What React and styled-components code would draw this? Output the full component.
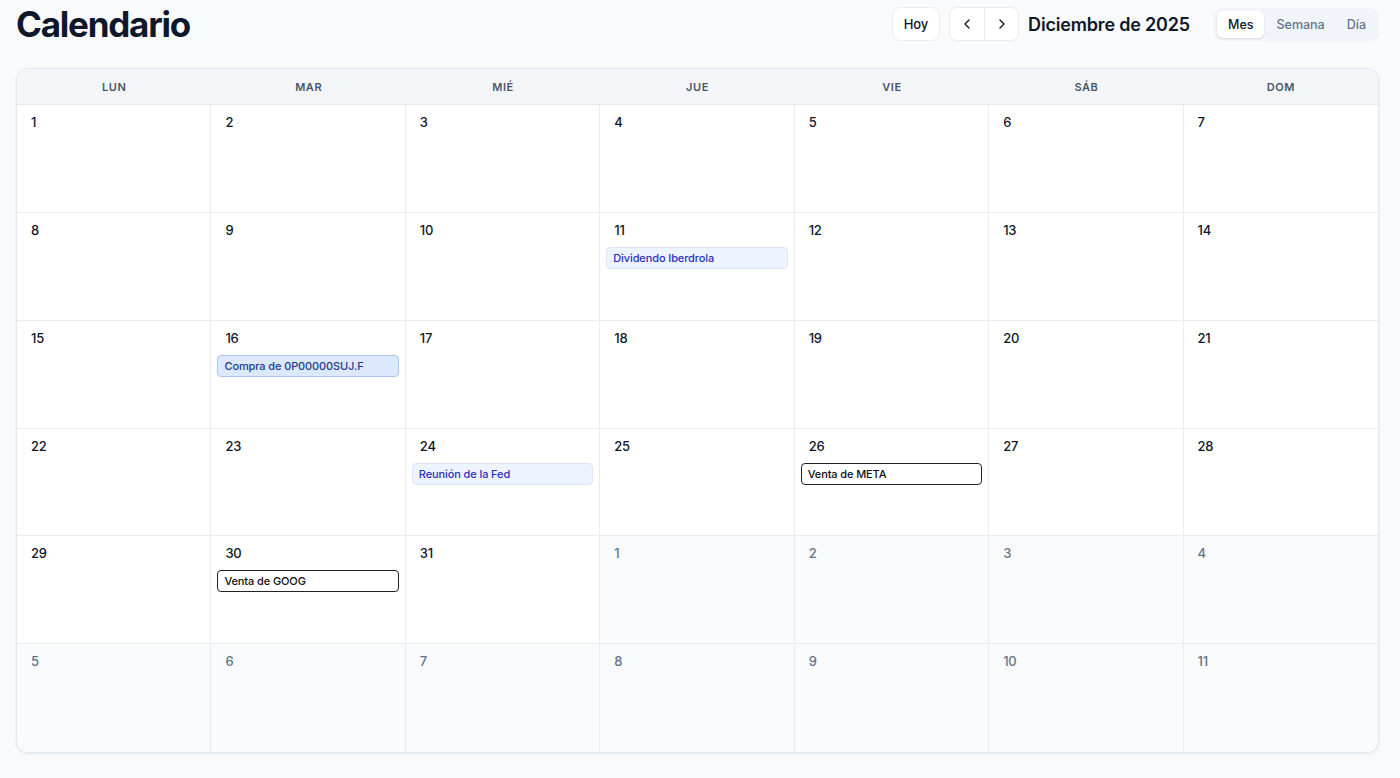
import React from 'react';
import styled, { createGlobalStyle } from 'styled-components';
import { ChevronLeft, ChevronRight } from 'lucide-react';

const GlobalStyle = createGlobalStyle`
  * { box-sizing: border-box; }
  html, body { margin: 0; padding: 0; background: #f8fafc; }
  body {
    font-family: Inter, "Noto Sans", "Liberation Sans", sans-serif;
    color: #0f172a;
  }
`;

// Page wrapper
const Page = styled.div`
  height: 100vh;
  display: flex;
  flex-direction: column;
  padding: 6px 21px 25px 16px;
  background: #f8fafc;
`;

const TopBar = styled.header`
  height: 36px;
  display: flex;
  align-items: center;
  justify-content: space-between;
  margin-bottom: 26px;
`;

const Title = styled.h1`
  margin: 0;
  font-size: 35px;
  font-weight: 700;
  letter-spacing: -0.035em;
  color: #0f172a;
  line-height: 36px;
`;

const Controls = styled.div`
  display: flex;
  align-items: center;
  gap: 9px;
`;

const PlainButton = styled.button`
  height: 34px;
  padding: 0 11px;
  border: 1px solid #e8ecf1;
  border-radius: 8px;
  background: #fff;
  font-family: inherit;
  font-size: 13px;
  font-weight: 500;
  letter-spacing: -0.01em;
  color: #0f172a;
  cursor: pointer;
`;

const NavGroup = styled.div`
  display: flex;
  height: 34px;
  border: 1px solid #e8ecf1;
  border-radius: 8px;
  background: #fff;
  overflow: hidden;
`;

const NavButton = styled.button`
  width: 34px;
  display: flex;
  align-items: center;
  justify-content: center;
  border: 0;
  background: transparent;
  color: #0f172a;
  cursor: pointer;
  & + & { border-left: 1px solid #e8ecf1; }
`;

const MonthLabel = styled.span`
  font-size: 18px;
  font-weight: 600;
  letter-spacing: -0.01em;
  color: #0f172a;
  margin-right: 15px;
`;

const Segmented = styled.div`
  display: flex;
  height: 33px;
  padding: 3px;
  gap: 2px;
  border-radius: 8px;
  background: #f1f4f8;
`;

const Segment = styled.button`
  height: 27px;
  padding: 0 ${(p) => (p.$active ? '11px' : '10px')};
  border: 0;
  border-radius: 6px;
  background: ${(p) => (p.$active ? '#fff' : 'transparent')};
  box-shadow: ${(p) => (p.$active ? '0 1px 2px rgba(15, 23, 42, 0.12)' : 'none')};
  font-family: inherit;
  font-size: 12.5px;
  font-weight: 500;
  color: ${(p) => (p.$active ? '#0f172a' : '#64748b')};
  cursor: pointer;
`;

// Calendar grid
const Board = styled.div`
  flex: 1;
  display: flex;
  flex-direction: column;
  border: 1px solid #e3e8ee;
  border-radius: 12px;
  background: #fff;
  box-shadow: 0 1px 3px rgba(15, 23, 42, 0.08);
  overflow: hidden;
`;

const WeekDays = styled.div`
  display: grid;
  grid-template-columns: repeat(7, 1fr);
  height: 36px;
  background: #f3f5f8;
  border-bottom: 1px solid #e5e9ef;
`;

const WeekDay = styled.div`
  display: flex;
  align-items: center;
  justify-content: center;
  font-size: 11px;
  font-weight: 600;
  letter-spacing: 0.05em;
  color: #475569;
`;

const Weeks = styled.div`
  flex: 1;
  display: grid;
  grid-template-columns: repeat(7, 1fr);
  grid-template-rows: repeat(6, 1fr);
`;

const Cell = styled.div`
  padding: 9px 6px 0;
  background: ${(p) => (p.$outside ? '#f8fafc' : '#fff')};
  border-right: ${(p) => (p.$lastCol ? '0' : '1px solid #e9edf2')};
  border-bottom: ${(p) => (p.$lastRow ? '0' : '1px solid #e9edf2')};
  min-width: 0;
`;

const DayNumber = styled.div`
  padding-left: 8px;
  font-size: 13px;
  line-height: 16px;
  font-weight: 500;
  letter-spacing: -0.02em;
  color: ${(p) => (p.$outside ? '#64748b' : '#0f172a')};
  margin-bottom: 9px;
`;

const eventThemes = {
  dividend: { bg: '#eef4ff', border: '#dbe6fb', color: '#2a2fc4' },
  buy: { bg: '#dbe8fe', border: '#a9c6f5', color: '#1e3a8a' },
  meeting: { bg: '#eef4ff', border: '#dbe6fb', color: '#2a2fc4' },
  sell: { bg: '#fff', border: '#222', color: '#0f0f0f' },
};

const Event = styled.div`
  height: 22px;
  display: flex;
  align-items: center;
  padding: 0 6px;
  border-radius: 4px;
  border: 1px solid ${(p) => eventThemes[p.$kind].border};
  background: ${(p) => eventThemes[p.$kind].bg};
  color: ${(p) => eventThemes[p.$kind].color};
  font-size: 11px;
  font-weight: 500;
  letter-spacing: -0.01em;
  white-space: nowrap;
  overflow: hidden;
  text-overflow: ellipsis;
`;

const DAYS = ['LUN', 'MAR', 'MIÉ', 'JUE', 'VIE', 'SÁB', 'DOM'];

const EVENTS = {
  11: { kind: 'dividend', label: 'Dividendo Iberdrola' },
  16: { kind: 'buy', label: 'Compra de 0P00000SUJ.F' },
  24: { kind: 'meeting', label: 'Reunión de la Fed' },
  26: { kind: 'sell', label: 'Venta de META' },
  30: { kind: 'sell', label: 'Venta de GOOG' },
};

// December 2025 starts on Monday
const buildDays = () => {
  const days = [];
  for (let i = 0; i < 42; i++) {
    if (i < 31) days.push({ day: i + 1, outside: false });
    else days.push({ day: i - 30, outside: true });
  }
  return days;
};

const App = () => {
  const days = buildDays();
  return (
    <>
      <GlobalStyle />
      <Page>
        <TopBar>
          <Title>Calendario</Title>
          <Controls>
            <PlainButton>Hoy</PlainButton>
            <NavGroup>
              <NavButton aria-label="Anterior">
                <ChevronLeft size={16} strokeWidth={2} />
              </NavButton>
              <NavButton aria-label="Siguiente">
                <ChevronRight size={16} strokeWidth={2} />
              </NavButton>
            </NavGroup>
            <MonthLabel>Diciembre de 2025</MonthLabel>
            <Segmented>
              <Segment $active>Mes</Segment>
              <Segment>Semana</Segment>
              <Segment>Día</Segment>
            </Segmented>
          </Controls>
        </TopBar>
        <Board>
          <WeekDays>
            {DAYS.map((d) => (
              <WeekDay key={d}>{d}</WeekDay>
            ))}
          </WeekDays>
          <Weeks>
            {days.map((d, i) => {
              const ev = !d.outside && EVENTS[d.day];
              return (
                <Cell
                  key={i}
                  $outside={d.outside}
                  $lastCol={i % 7 === 6}
                  $lastRow={i >= 35}
                >
                  <DayNumber $outside={d.outside}>{d.day}</DayNumber>
                  {ev && <Event $kind={ev.kind}>{ev.label}</Event>}
                </Cell>
              );
            })}
          </Weeks>
        </Board>
      </Page>
    </>
  );
};

export default App;
